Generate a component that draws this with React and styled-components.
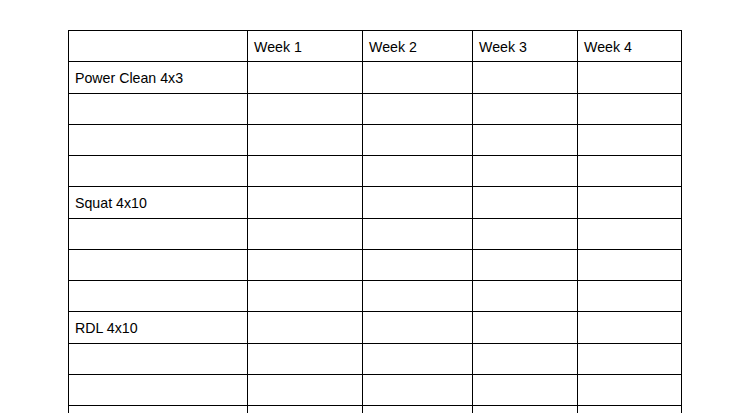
import React from "react";
import styled, { createGlobalStyle } from "styled-components";

const Global = createGlobalStyle`
  html, body {
    margin: 0;
    padding: 0;
    background: #ffffff;
    overflow: hidden;
  }
  body {
    font-family: "Liberation Sans", Arial, Helvetica, sans-serif;
    color: #000000;
  }
`;

const Page = styled.div`
  padding: 30px 0 0 68px;
  height: 413px;
  box-sizing: border-box;
  overflow: hidden;
`;

const Table = styled.table`
  border-collapse: collapse;
  table-layout: fixed;
  width: 613px;
`;

const Col = styled.col`
  width: ${(p) => p.$w}px;
`;

const Row = styled.tr`
  height: 31.25px;
`;

const Cell = styled.td`
  border: 1px solid #000000;
  padding: 1px 6px 0 6px;
  font-size: 14.2px;
  line-height: 16px;
  vertical-align: middle;
  white-space: nowrap;
  box-sizing: border-box;
`;

const widths = [179, 115, 110, 105, 104];
const weeks = ["Week 1", "Week 2", "Week 3", "Week 4"];
const exercises = ["Power Clean 4x3", "Squat 4x10", "RDL 4x10"];

export default function App() {
  const rows = [];
  exercises.forEach((ex) => {
    rows.push(ex);
    rows.push("", "", "");
  });
  return (
    <>
      <Global />
      <Page>
        <Table>
          <colgroup>
            {widths.map((w, i) => (
              <Col key={i} $w={w} />
            ))}
          </colgroup>
          <tbody>
            <Row>
              <Cell />
              {weeks.map((w) => (
                <Cell key={w}>{w}</Cell>
              ))}
            </Row>
            {rows.map((label, i) => (
              <Row key={i}>
                <Cell>{label}</Cell>
                {weeks.map((w) => (
                  <Cell key={w} />
                ))}
              </Row>
            ))}
          </tbody>
        </Table>
      </Page>
    </>
  );
}
